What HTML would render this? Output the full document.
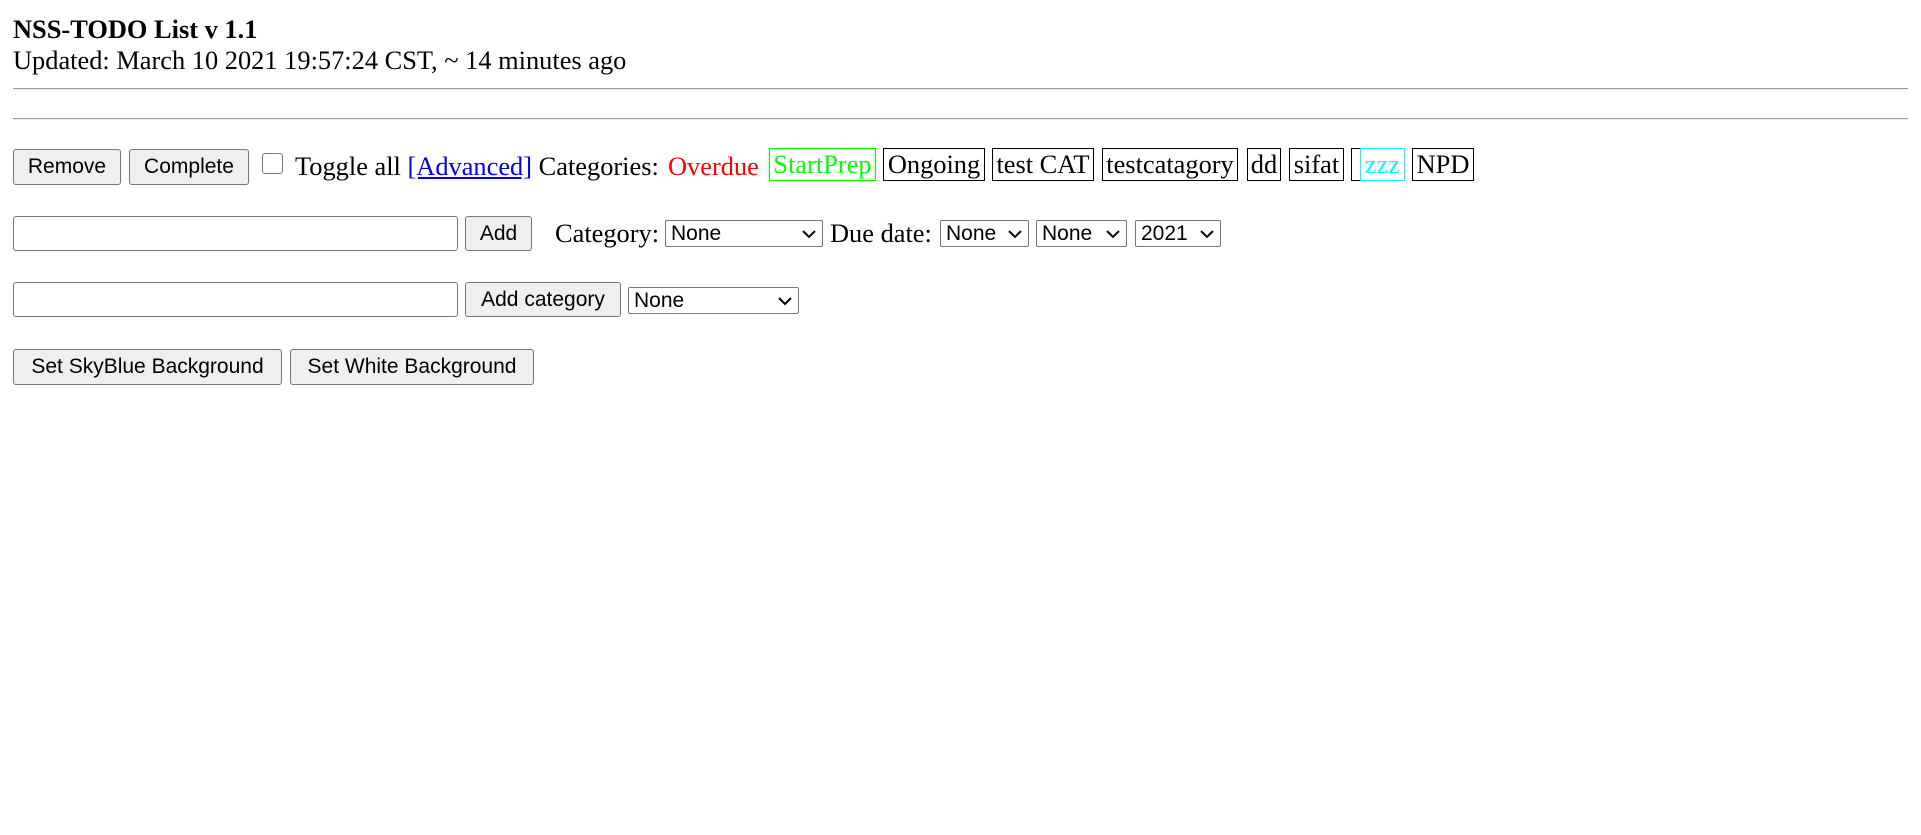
<!DOCTYPE html>
<html><head><meta charset="utf-8"><style>
body{margin:0;width:1921px;height:835px;background:#fff;position:relative;overflow:hidden;font-family:"Liberation Serif",serif;font-size:26.4px;color:#000}
.a{position:absolute;white-space:nowrap}
.t{line-height:30px}
.btn{position:absolute;box-sizing:border-box;background:#efefef;border:1px solid #767676;border-radius:3px;font-family:"Liberation Sans",sans-serif;font-size:21px;color:#000;display:flex;align-items:center;justify-content:center}
.inp{position:absolute;box-sizing:border-box;border:1px solid #767676;border-radius:3px;background:#fff}
.sel{position:absolute;box-sizing:border-box;border:1px solid #767676;border-radius:2px;background:#fff;font-family:"Liberation Sans",sans-serif;font-size:21px;padding-left:5px;line-height:25px}
.sel svg{position:absolute;right:6px;top:9px}
.cat{position:absolute;box-sizing:border-box;border:1.5px solid #000;top:148px;height:33px;line-height:30px;text-align:center}
hr{position:absolute;left:13px;width:1895px;margin:0;border:0;border-top:1px solid #9a9a9a;border-bottom:1px solid #eee;height:0}
</style></head><body>
<div class="a t" style="left:13px;top:14px;font-weight:bold">NSS-TODO List v 1.1</div>
<div class="a t" style="left:13px;top:45px">Updated: March 10 2021 19:57:24 CST, ~ 14 minutes ago</div>
<hr style="top:88px"><hr style="top:118px">

<div class="btn" style="left:13px;top:149px;width:108px;height:36px">Remove</div>
<div class="btn" style="left:129px;top:149px;width:120px;height:36px">Complete</div>
<div class="a" style="left:262px;top:153px;width:21px;height:21px;box-sizing:border-box;border:1px solid #767676;border-radius:3px"></div>
<div class="a t" style="left:295px;top:151px">Toggle all <span style="color:#00e;text-decoration:underline">[Advanced]</span> Categories:</div>
<div class="a t" style="left:668px;top:151px;color:#f00">Overdue</div>
<div class="cat" style="left:769px;width:107px;border-color:#0f0;border-width:1px;color:#0f0">StartPrep</div>
<div class="cat" style="left:883px;width:102px">Ongoing</div>
<div class="cat" style="left:992px;width:102px">test CAT</div>
<div class="cat" style="left:1102px;width:136px">testcatagory</div>
<div class="cat" style="left:1247px;width:34px">dd</div>
<div class="cat" style="left:1289px;width:55px">sifat</div>
<div class="cat" style="left:1351px;width:10px"></div>
<div class="cat" style="left:1360px;width:45px;border-color:#0ff;border-width:1px;color:#0ff">zzz</div>
<div class="cat" style="left:1412px;width:62px">NPD</div>

<div class="inp" style="left:13px;top:216px;width:445px;height:35px"></div>
<div class="btn" style="left:465px;top:216px;width:67px;height:35px">Add</div>
<div class="a t" style="left:555px;top:218px">Category:</div>
<div class="sel" style="left:665px;top:220px;width:158px;height:27px">None<svg width="14" height="9"><path d="M1 1l6 6 6-6" fill="none" stroke="#000" stroke-width="2"/></svg></div>
<div class="a t" style="left:830px;top:218px">Due date:</div>
<div class="sel" style="left:940px;top:220px;width:89px;height:27px">None<svg width="14" height="9"><path d="M1 1l6 6 6-6" fill="none" stroke="#000" stroke-width="2"/></svg></div>
<div class="sel" style="left:1036px;top:220px;width:91px;height:27px">None<svg width="14" height="9"><path d="M1 1l6 6 6-6" fill="none" stroke="#000" stroke-width="2"/></svg></div>
<div class="sel" style="left:1135px;top:220px;width:86px;height:27px">2021<svg width="14" height="9"><path d="M1 1l6 6 6-6" fill="none" stroke="#000" stroke-width="2"/></svg></div>

<div class="inp" style="left:13px;top:282px;width:445px;height:35px"></div>
<div class="btn" style="left:465px;top:282px;width:156px;height:35px">Add category</div>
<div class="sel" style="left:628px;top:287px;width:171px;height:27px">None<svg width="14" height="9"><path d="M1 1l6 6 6-6" fill="none" stroke="#000" stroke-width="2"/></svg></div>

<div class="btn" style="left:13px;top:349px;width:269px;height:36px">Set SkyBlue Background</div>
<div class="btn" style="left:290px;top:349px;width:244px;height:36px">Set White Background</div>
</body></html>
